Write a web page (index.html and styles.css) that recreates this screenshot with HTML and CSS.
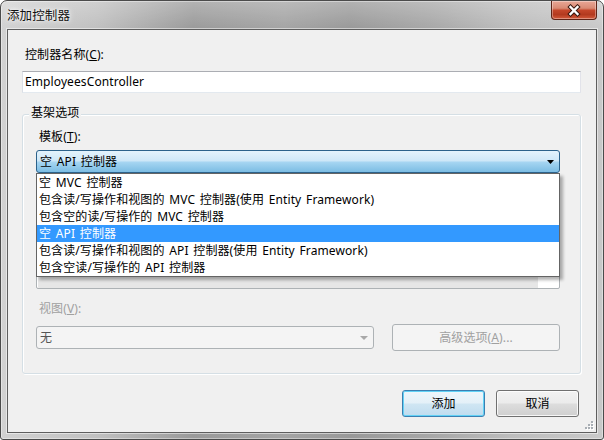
FILE: index.html
```html
<!DOCTYPE html>
<html lang="zh-CN">
<head>
<meta charset="utf-8">
<title>添加控制器</title>
<link rel="stylesheet" href="styles.css">
</head>
<body>
<div class="window">
  <div class="titlebar">
    <span class="title">添加控制器</span>
    <div class="close">
      <svg width="14" height="13" viewBox="0 0 14 13">
        <path d="M3.5 3 L10.5 10 M10.5 3 L3.5 10" stroke="#3a1a12" stroke-width="4.4" stroke-linecap="square" fill="none"/>
        <path d="M3.5 3 L10.5 10 M10.5 3 L3.5 10" stroke="#ffffff" stroke-width="2.4" stroke-linecap="square" fill="none"/>
      </svg>
    </div>
  </div>
  <div class="client">
    <div class="label">控制器名称(<u>C</u>):</div>
    <div class="textbox">EmployeesController</div>
    <div class="group">
      <div class="group-title">基架选项</div>
      <div class="label first">模板(<u>T</u>):</div>
      <div class="combo-wrap">
        <div class="combo open">
          <span>空 API 控制器</span>
          <svg class="arrow" width="7" height="4" viewBox="0 0 7 4"><polygon points="0,0 7,0 3.5,4" fill="#000"/></svg>
        </div>
        <ul class="dropdown">
          <li>空 MVC 控制器</li>
          <li>包含读/写操作和视图的 MVC 控制器(使用 Entity Framework)</li>
          <li>包含空的读/写操作的 MVC 控制器</li>
          <li class="selected">空 API 控制器</li>
          <li>包含读/写操作和视图的 API 控制器(使用 Entity Framework)</li>
          <li>包含空读/写操作的 API 控制器</li>
        </ul>
      </div>
      <div class="hidden-box"></div>
      <div class="label disabled">视图(<u>V</u>):</div>
      <div class="row">
        <div class="combo disabled">
          <span>无</span>
          <svg class="arrow" width="8" height="4" viewBox="0 0 8 4"><polygon points="0,0 8,0 4,4" fill="#a8a8a8"/></svg>
        </div>
        <div class="button wide disabled">高级选项(<u>A</u>)...</div>
      </div>
    </div>
    <div class="actions">
      <div class="button default">添加</div>
      <div class="button">取消</div>
    </div>
    <svg class="gripper" width="10" height="10" viewBox="0 0 10 10">
      <g fill="#ffffff">
        <rect x="8" y="2" width="2" height="2"/>
        <rect x="5" y="5" width="2" height="2"/><rect x="8" y="5" width="2" height="2"/>
        <rect x="2" y="8" width="2" height="2"/><rect x="5" y="8" width="2" height="2"/><rect x="8" y="8" width="2" height="2"/>
      </g>
      <g fill="#a8aeb4">
        <rect x="7" y="1" width="2" height="2"/>
        <rect x="4" y="4" width="2" height="2"/><rect x="7" y="4" width="2" height="2"/>
        <rect x="1" y="7" width="2" height="2"/><rect x="4" y="7" width="2" height="2"/><rect x="7" y="7" width="2" height="2"/>
      </g>
    </svg>
  </div>
</div>
</body>
</html>
```

FILE: styles.css
```css
* { box-sizing: border-box; }

body {
  margin: 0;
  font-family: "Noto Sans", "Noto Sans CJK SC", sans-serif;
  font-size: 12px;
  letter-spacing: 0.1px;
  word-spacing: 1.5px;
  color: #000;
}

u { text-decoration: underline; text-underline-offset: 1px; }

.window {
  width: 604px;
  height: 440px;
  border: 1px solid #4b4b4b;
  border-radius: 7px 7px 3px 3px;
  background:
    linear-gradient(180deg, rgba(255,255,255,0.25) 0, rgba(255,255,255,0) 28px),
    linear-gradient(90deg, #d2d2d2 0%, #c0c0c0 16%, #9a9a9a 32%, #a4a4a4 47%, #999999 58%, #a8a8a8 72%, #bdbdbd 85%, #c9c9c9 100%);
  box-shadow: inset 0 0 0 1px rgba(255,255,255,0.4);
  display: flex;
  flex-direction: column;
  overflow: hidden;
}

.titlebar {
  flex: none;
  height: 28px;
  display: flex;
  align-items: center;
  padding: 0 6px;
}

.title {
  font-family: "Noto Sans CJK SC", sans-serif;
  font-size: 12.5px;
  line-height: 16px;
  color: #111;
  text-shadow: 0 0 6px #fff, 0 0 3px rgba(255,255,255,0.9);
}

.close {
  margin-left: auto;
  align-self: flex-start;
  width: 46px;
  height: 19px;
  border: 1px solid #5e2417;
  border-top: none;
  border-radius: 0 0 4px 4px;
  background: linear-gradient(180deg, #e9a796 0%, #d98a74 40%, #c4462a 52%, #b33a1f 75%, #d35a3b 100%);
  box-shadow: inset 0 0 0 1px rgba(255,255,255,0.35);
  display: flex;
  align-items: center;
  justify-content: center;
}

.client {
  flex: 1;
  margin: 0 6px 6px;
  border: 1px solid #5e5e5e;
  background: #f0f0f0;
  box-shadow: 0 0 0 1px rgba(255,255,255,0.5);
  padding: 17px 15px 0 14px;
  position: relative;
}

.label {
  line-height: 16px;
  padding-left: 3px;
  white-space: nowrap;
}

.textbox {
  margin-top: 8px;
  height: 22px;
  border: 1px solid;
  border-color: #abadb3 #e2e3ea #e3e9ef #dbdfe6;
  background: #fff;
  padding-left: 2px;
  line-height: 20px;
}

.group {
  margin-top: 21px;
  border: 1px solid #d5dfe5;
  border-radius: 3px;
  padding: 0 20px 22px 13px;
  box-shadow: inset 1px 1px 0 #fff, 1px 1px 0 #fff;
}

.group-title {
  width: max-content;
  margin: -10px 0 0 -7px;
  padding: 0 2px;
  background: #f0f0f0;
  line-height: 16px;
}

.label.first { margin-top: 8px; }

.combo-wrap {
  position: relative;
  margin-top: 5px;
  height: 23px;
}

.combo {
  height: 23px;
  border-radius: 3px;
  display: flex;
  align-items: center;
  justify-content: space-between;
  padding: 0 5px 0 3px;
  line-height: 16px;
}

.combo.open {
  border: 1px solid #2c628b;
  background: linear-gradient(180deg, #e4f3fc 0%, #cfe8f8 45%, #a4d4f1 55%, #7cbde3 100%);
}

.dropdown {
  position: absolute;
  top: 23px;
  left: 0;
  width: 100%;
  margin: 0;
  padding: 0;
  list-style: none;
  background: #fff;
  border: 1px solid #646464;
  box-shadow: 3px 3px 3px rgba(0,0,0,0.3);
  z-index: 2;
}

.dropdown li {
  height: 17px;
  line-height: 17px;
  padding-left: 2px;
  white-space: nowrap;
}

.dropdown li.selected {
  background: #3399ff;
  color: #fff;
}

.hidden-box {
  margin-top: 93px;
  height: 23px;
  border: 1px solid #adb2b5;
  border-radius: 2px;
  background: linear-gradient(90deg, #e6e6e6 calc(100% - 21px), #ffffff calc(100% - 21px));
  box-shadow: inset 1px 0 0 #fff;
}

.label.disabled {
  margin-top: 12px;
  color: #a0a0a0;
}

.row {
  margin-top: 7px;
  height: 27px;
  display: flex;
  align-items: center;
  gap: 18px;
}

.combo.disabled {
  width: 338px;
  border: 1px solid #adb2b5;
  background: #f4f4f4;
  color: #555;
  padding-right: 5px;
}

.button {
  width: 83px;
  height: 27px;
  border: 1px solid #707070;
  border-radius: 3px;
  display: flex;
  align-items: center;
  justify-content: center;
  line-height: 16px;
  background: linear-gradient(180deg, #f2f2f2 0%, #ebebeb 49%, #dddddd 51%, #cfcfcf 100%);
  box-shadow: inset 0 0 0 1px rgba(255,255,255,0.8);
}

.button.wide.disabled {
  width: 168px;
  border-color: #adb2b5;
  background: #f4f4f4;
  color: #a0a0a0;
  box-shadow: none;
}

.actions {
  margin-top: 16px;
  display: flex;
  justify-content: flex-end;
  gap: 11px;
  padding-right: 2px;
}

.button.default {
  border-color: #3c7fb1;
  background: linear-gradient(180deg, #eef6fb 0%, #e4f0f8 49%, #d0e6f3 51%, #bfdcef 100%);
  box-shadow: inset 0 0 0 1px #62d2f6;
}

.gripper {
  position: absolute;
  right: 2px;
  bottom: 2px;
}
```
